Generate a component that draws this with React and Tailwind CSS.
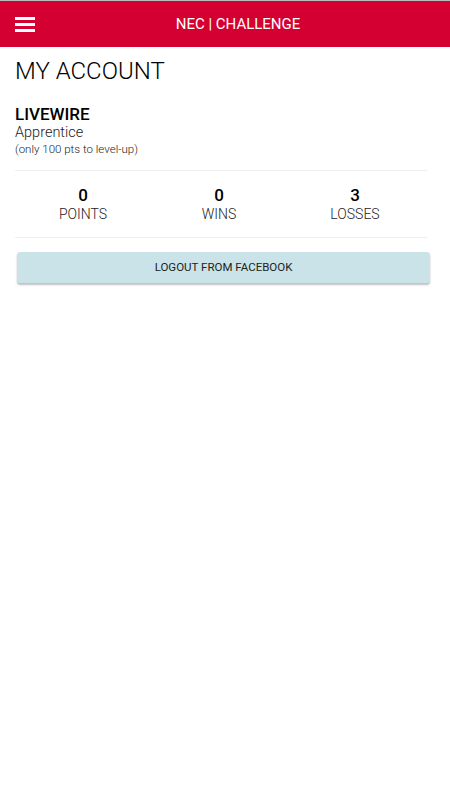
const stats = [
  { value: 0, label: "POINTS" },
  { value: 0, label: "WINS" },
  { value: 3, label: "LOSSES" },
];

export default function App() {
  return (
    <div className="min-h-[800px] bg-white font-['Roboto',sans-serif] text-[#111]">
      <div className="border-t border-[#bbb] bg-[#d50032] h-[47px] flex items-center relative">
        <div className="absolute left-[15px] top-[16px] flex flex-col gap-[3px]">
          <div className="w-[20px] h-[3px] bg-white" />
          <div className="w-[20px] h-[3px] bg-white" />
          <div className="w-[20px] h-[3px] bg-white" />
        </div>
        <h1 className="w-full text-center text-white text-[15px] font-normal pl-[26px]">
          NEC | CHALLENGE
        </h1>
      </div>

      <div className="px-[15px] pr-[23px]">
        <h2 className="text-[24px] leading-[28px] mt-[10px] font-light text-black">MY ACCOUNT</h2>

        <div className="mt-[19px]">
          <div className="text-[17px] font-medium leading-[20px] text-black">LIVEWIRE</div>
          <div className="text-[14.5px] leading-[18px] font-light text-[#222]">Apprentice</div>
          <div className="text-[11.5px] leading-[14px] font-light text-[#222]">(only 100 pts to level-up)</div>
        </div>

        <div className="mt-[14px] border-t border-[#eee] border-b">
          <div className="grid grid-cols-3 pt-[14px] pb-[14px] pr-[4px]">
            {stats.map((s) => (
              <div key={s.label} className="flex flex-col items-center">
                <span className="text-[17px] font-medium leading-[20px] text-black">{s.value}</span>
                <span className="text-[14px] leading-[18px] font-light text-[#222]">{s.label}</span>
              </div>
            ))}
          </div>
        </div>

        <button className="mt-[14px] ml-[2px] w-[413px] h-[31px] rounded-[3px] bg-[#c9e3e8] shadow-[0_2px_2px_rgba(0,0,0,0.25)] text-[11.5px] text-[#222] flex items-center justify-center">
          LOGOUT FROM FACEBOOK
        </button>
      </div>
    </div>
  );
}
